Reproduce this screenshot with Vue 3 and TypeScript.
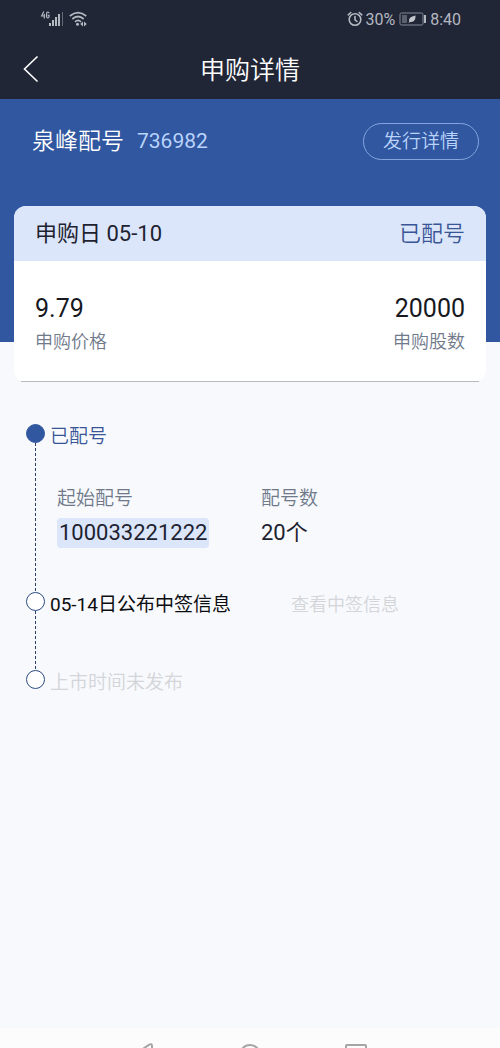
<script setup lang="ts">
interface Figure {
  value: string
  label: string
}

const stock = { name: '泉峰配号', code: '736982' }
const status = '已配号'
const figures: Figure[] = [
  { value: '9.79', label: '申购价格' },
  { value: '20000', label: '申购股数' },
]
</script>

<template>
  <div class="page">
    <header class="top">
      <div class="statusbar">
        <div class="group">
          <svg class="signal" viewBox="0 0 24 18" width="24" height="18" aria-hidden="true">
            <g fill="none" stroke="#b4b8c1" stroke-width="1.2">
              <path d="M3.8 1.5 L1.6 6 H5.2 M4.3 4 V8.5" />
              <path d="M9 3.2 Q9 2 7.8 2 Q6.6 2 6.6 3.4 V6.6 Q6.6 8 7.8 8 Q9 8 9 6.8 V5.4 H7.8" />
            </g>
            <g fill="#b4b8c1">
              <rect x="9" y="13" width="2" height="3" />
              <rect x="12" y="10" width="2" height="6" />
              <rect x="15" y="7" width="2" height="9" />
              <rect x="18" y="4" width="2" height="12" />
            </g>
            <rect x="22" y="2" width="1" height="14" fill="#666b78" />
          </svg>
          <svg class="wifi" viewBox="0 0 18 16" width="18" height="16" aria-hidden="true">
            <g fill="none" stroke="#b4b8c1" stroke-width="1.7">
              <path d="M0.8 5 Q9 -1.8 17.2 5" />
              <path d="M3.3 8 Q9 3 14.7 8" />
              <path d="M6 10.8 Q9 8 12 10.8" />
            </g>
            <circle cx="8.5" cy="13.2" r="1.5" fill="#b4b8c1" />
            <path d="M14 10.5 V15.5 L11.2 13 Z M15 10.5 V15.5 L17.8 13 Z" fill="#b4b8c1" />
          </svg>
        </div>
        <div class="group">
          <svg viewBox="0 0 16 16" width="16" height="16" aria-hidden="true">
            <g fill="none" stroke="#b4b8c1" stroke-width="1.6" stroke-linecap="round">
              <circle cx="8" cy="8.5" r="5.8" />
              <path d="M8 5.5 V8.8 L10 10.5 M1.2 3.8 L3.8 1.5 M12.2 1.5 L14.8 3.8" />
            </g>
          </svg>
          <span>30%</span>
          <svg class="battery" viewBox="0 0 28 14" width="28" height="14" aria-hidden="true">
            <rect x="1" y="1" width="23" height="12" rx="1.5" fill="none" stroke="#858a96" />
            <rect x="3" y="3" width="5" height="8" fill="#5c616e" />
            <path d="M9.5 11 L10.2 9.5 Q8.8 5 16.5 3.5 Q17 10.5 11.2 10 Z" fill="#c3c6cd" />
            <rect x="25" y="3" width="2" height="8" fill="#b4b8c1" />
          </svg>
          <span>8:40</span>
        </div>
      </div>
      <div class="titlebar">
        <button class="back" type="button" aria-label="返回">
          <svg viewBox="0 0 16 28" width="16" height="28" aria-hidden="true">
            <path d="M14.5 1.5 L1.5 14 L14.5 26.5" fill="none" stroke="#fff" stroke-width="1.6" />
          </svg>
        </button>
        <h1>申购详情</h1>
      </div>
    </header>

    <section class="hero">
      <h2>{{ stock.name }}</h2>
      <span class="code">{{ stock.code }}</span>
      <button class="issue" type="button">发行详情</button>
    </section>

    <section class="card">
      <div class="card-head">
        <span>申购日 05-10</span>
        <span class="state">{{ status }}</span>
      </div>
      <dl class="figures">
        <div v-for="f in figures" :key="f.label" class="figure">
          <dt>{{ f.label }}</dt>
          <dd>{{ f.value }}</dd>
        </div>
      </dl>
    </section>

    <ol class="timeline">
      <li class="step done">
        <div class="rail"><i class="dot"></i></div>
        <div class="body">
          <p class="step-title">{{ status }}</p>
          <dl class="allot">
            <div>
              <dt>起始配号</dt>
              <dd><span class="mark">100033221222</span></dd>
            </div>
            <div>
              <dt>配号数</dt>
              <dd>20个</dd>
            </div>
          </dl>
        </div>
      </li>
      <li class="step next">
        <div class="rail"><i class="dot"></i></div>
        <div class="body row">
          <p class="step-title">05-14日公布中签信息</p>
          <button class="view" type="button" disabled>查看中签信息</button>
        </div>
      </li>
      <li class="step pending">
        <div class="rail"><i class="dot"></i></div>
        <div class="body">
          <p class="step-title">上市时间未发布</p>
        </div>
      </li>
    </ol>

    <nav class="sysnav" aria-label="系统导航">
      <button type="button" aria-label="返回">
        <svg viewBox="0 0 24 24" width="24" height="24" aria-hidden="true">
          <path d="M17 1.8 Q20 0 20 3 V21 Q20 24 17 22 L4 13.5 Q2 12 4 10.5 Z" />
        </svg>
      </button>
      <button type="button" aria-label="主页">
        <svg viewBox="0 0 24 24" width="24" height="24" aria-hidden="true">
          <circle cx="12" cy="12" r="10" />
        </svg>
      </button>
      <button type="button" aria-label="最近任务">
        <svg viewBox="0 0 24 24" width="24" height="24" aria-hidden="true">
          <rect x="2" y="2" width="20" height="20" rx="1" />
        </svg>
      </button>
    </nav>
  </div>
</template>

<style>
body {
  margin: 0;
  background: #f7f9fc;
}
</style>

<style scoped>
.page {
  display: flex;
  flex-direction: column;
  min-height: 100vh;
  background: #f7f9fc;
  color: #1e2230;
  font-family: Roboto, "Noto Sans CJK SC", sans-serif;
}
h1, h2, p, dl, dd, ol {
  margin: 0;
  padding: 0;
  font-weight: 400;
}
button {
  padding: 0;
  border: 0;
  background: none;
  font-family: inherit;
}
svg {
  display: block;
}
.top {
  background: #212636;
  color: #b4b8c1;
}
.statusbar {
  display: flex;
  justify-content: space-between;
  height: 38px;
  padding: 0 39px 0 40px;
  font-size: 16px;
}
.group {
  display: flex;
  align-items: center;
  gap: 2px;
}
.wifi {
  margin-left: 3px;
}
.battery {
  margin: 0 1px 0 2px;
}
.titlebar {
  display: grid;
  grid-template-columns: 60px 1fr 60px;
  align-items: center;
  height: 61px;
}
.back {
  justify-self: start;
  padding-left: 23px;
}
h1,
h2,
.issue,
.state,
.figure dt,
.allot dt,
.done .step-title,
.pending .step-title,
.view {
  font-weight: 350;
}
h1 {
  padding-top: 4px;
  color: #fff;
  font-size: 25px;
  line-height: 36px;
  text-align: center;
}
.hero {
  display: flex;
  align-items: center;
  height: 84px;
  padding: 0 21px 159px 32px;
  background: #3057a0;
}
h2 {
  padding-top: 2px;
  color: #fff;
  font-size: 23px;
  line-height: 32px;
}
.code {
  margin-left: 13px;
  color: #b9d3fb;
  font-size: 21px;
}
.issue {
  margin-left: auto;
  padding: 0 19px;
  border: 1px solid #86a5df;
  border-radius: 19px;
  color: #b9d3fb;
  font-size: 19px;
  line-height: 35px;
}
.card {
  margin: -136px 14px 0;
  border-radius: 12px;
  background: #fff;
}
.card-head {
  display: flex;
  justify-content: space-between;
  padding: 0 21px;
  border-radius: 12px 12px 0 0;
  background: #dbe6fa;
  font-size: 22px;
  line-height: 55px;
}
.state {
  color: #3a5596;
}
.figures {
  display: flex;
  justify-content: space-between;
  margin: 0 7px;
  padding: 30px 14px 24px;
  border-bottom: 1px solid #b9bbbf;
}
.figure {
  display: flex;
  flex-direction: column-reverse;
}
.figure:last-child {
  text-align: right;
}
.figure dt {
  color: #70798a;
  font-size: 18px;
  line-height: 30px;
}
.figure dd {
  color: #17191f;
  font-size: 25px;
  line-height: 36px;
}
.timeline {
  flex: 1;
  padding: 38px 14px 0 26px;
  list-style: none;
}
.step {
  display: flex;
  gap: 5px;
}
.rail {
  display: flex;
  flex-direction: column;
  align-items: center;
  width: 19px;
  padding-top: 4px;
}
.rail::after {
  content: "";
  flex: 1;
  width: 1px;
  margin-bottom: -4px;
  background: repeating-linear-gradient(#2b3f66 0 3px, transparent 3px 5px);
}
.step:last-child .rail::after {
  display: none;
}
.dot {
  box-sizing: border-box;
  width: 19px;
  height: 19px;
  border: 1px solid #2c4a84;
  border-radius: 50%;
  background: #fff;
}
.done .dot {
  border-color: #3057a0;
  background: #3057a0;
}
.body {
  flex: 1;
}
.step-title {
  font-size: 19px;
  line-height: 34px;
}
.done .step-title {
  color: #3a5596;
}
.next .step-title {
  color: #0c0d10;
}
.pending .step-title,
.view {
  color: #d3d5d9;
}
.done {
  min-height: 168px;
}
.next {
  min-height: 78px;
}
.allot {
  display: grid;
  grid-template-columns: 204px 1fr;
  margin: 30px 0 0 7px;
}
.allot dt {
  color: #70798a;
  font-size: 19px;
  line-height: 30px;
}
.allot dd {
  padding-top: 4px;
  font-size: 22px;
  line-height: 30px;
}
.mark {
  display: inline-block;
  padding: 0 2px;
  border-radius: 4px;
  background: #dbe6fa;
}
.row {
  display: flex;
  align-items: flex-start;
}
.view {
  margin-left: 60px;
  font-size: 18px;
  line-height: 34px;
}
.sysnav {
  display: flex;
  justify-content: center;
  gap: 82px;
  height: 20px;
  overflow: hidden;
  background: #fcfcfc;
}
.sysnav button {
  display: flex;
  align-items: flex-start;
  padding-top: 15px;
}
.sysnav path,
.sysnav circle,
.sysnav rect {
  fill: none;
  stroke: #a5a5a5;
  stroke-width: 2;
}
</style>
